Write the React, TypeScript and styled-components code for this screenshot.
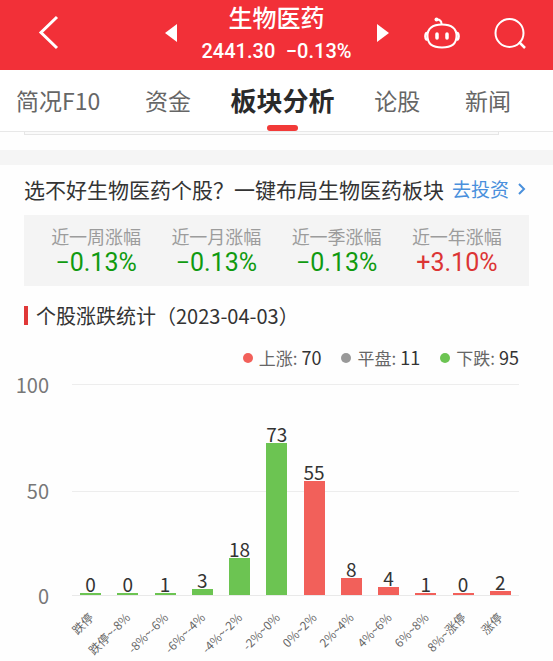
import React from "react";
import styled, { createGlobalStyle } from "styled-components";

const GlobalStyle = createGlobalStyle`
  * { box-sizing: border-box; }
  body {
    margin: 0;
    background: #fefefe;
    color: #333;
    font-family: "Noto Sans CJK SC", sans-serif;
  }
  button { border: 0; padding: 0; background: none; color: inherit; font: inherit; cursor: pointer; }
  a { text-decoration: none; }
  h1, h2, p, dl, dd, ul { margin: 0; padding: 0; font-weight: inherit; }
  svg { display: block; }
`;

const Header = styled.header`
  display: flex;
  align-items: center;
  justify-content: space-between;
  height: 70px;
  padding: 0 27px 4px 38px;
  background: #f23038;
  color: #fff;
`;

const Switcher = styled.div`
  display: flex;
  align-items: center;
  gap: 25px;
  padding-left: 69px;
`;

const Heading = styled.div`
  width: 150px;
  text-align: center;
  white-space: nowrap;
`;

const Name = styled.h1`
  font-size: 24px;
  line-height: 36px;
  font-weight: 500;
`;

const Quote = styled.p`
  display: flex;
  justify-content: space-between;
  font: 500 20px/32px Roboto, sans-serif;
`;

const Actions = styled.div`
  display: flex;
  align-items: center;
  gap: 34px;
`;

const Tabs = styled.nav`
  display: flex;
  justify-content: space-between;
  height: 62px;
  padding: 0 42px 0 16px;
  border-bottom: 1px solid #e8e8e8;
  background: #fff;
`;

const Tab = styled.button<{ $active?: boolean }>`
  display: flex;
  flex-direction: column;
  align-items: center;
  justify-content: space-between;
  height: 61px;
  margin: 0 ${(p) => (p.$active ? -5 : 0)}px;
  font-size: ${(p) => (p.$active ? 26 : 23)}px;
  font-weight: ${(p) => (p.$active ? 700 : 400)};
  line-height: 60px;
  color: ${(p) => (p.$active ? "#2a2a2a" : "#666")};
  white-space: nowrap;

  &::after {
    content: "";
    flex: none;
    width: 31px;
    height: 6px;
    margin-top: -6px;
    border-radius: 3px;
    background: ${(p) => (p.$active ? "#f23a38" : "transparent")};
  }
`;

const PreviousCard = styled.div`
  height: 3px;
  margin: 0 54px 15px 24px;
  border: solid #e6e6e6;
  border-width: 0 1px 1px;
  background: #fafafa;
`;

const Divider = styled.div`
  height: 15px;
  background: #f5f5f5;
`;

const Content = styled.main`
  padding: 0 24px;
`;

const Promo = styled.div`
  display: flex;
  align-items: center;
  justify-content: space-between;
  height: 50px;
  padding-bottom: 3px;
  font-size: 21px;
  white-space: nowrap;
`;

const InvestLink = styled.a`
  display: flex;
  align-items: center;
  gap: 9px;
  padding-right: 3px;
  font-size: 19px;
  color: #4a90dc;
`;

const Stats = styled.dl`
  display: grid;
  grid-template-columns: repeat(4, 1fr);
  height: 71px;
  padding: 8px 12px 0;
  background: #f4f4f4;
  text-align: center;
`;

const StatLabel = styled.dt`
  font-size: 18px;
  line-height: 26px;
  color: #9c9c9c;
  white-space: nowrap;
`;

const StatValue = styled.dd<{ $up?: boolean }>`
  font: 400 25px/28px Roboto, sans-serif;
  color: ${(p) => (p.$up ? "#dc3434" : "#109a10")};
`;

const SectionTitle = styled.h2`
  display: flex;
  align-items: center;
  gap: 8px;
  height: 58px;
  font-size: 20px;
  white-space: nowrap;

  &::before {
    content: "";
    width: 4px;
    height: 19px;
    background: #e03838;
  }
`;

const Legend = styled.ul`
  display: flex;
  justify-content: flex-end;
  gap: 20px;
  height: 40px;
  padding: 0 10px 13px 0;
  list-style: none;
  font-size: 18px;
  line-height: 27px;
  white-space: nowrap;
`;

const LegendItem = styled.li<{ $color: string }>`
  display: flex;
  align-items: center;
  gap: 6px;
  color: #333;

  &::before {
    content: "";
    width: 10px;
    height: 10px;
    border-radius: 50%;
    background: ${(p) => p.$color};
  }
  span { font-size: 17px; color: #666; }
`;

const Chart = styled.div`
  display: grid;
  grid-template-columns: 33px minmax(0, 1fr);
  column-gap: 23px;
  margin: 0 10px 0 -8px;
`;

const Axis = styled.div`
  display: flex;
  flex-direction: column;
  align-items: flex-end;
  justify-content: space-between;
  height: 239px;
  margin: -13px 0 -14px;
  font-size: 20px;
  line-height: 28px;
  color: #777;
`;

const Plot = styled.div`
  display: grid;
  grid-template-columns: repeat(12, minmax(0, 1fr));
  height: 212px;
  border-bottom: 1px solid #e9e9e9;
  background:
    linear-gradient(#ededed, #ededed) 0 0 / 100% 1px no-repeat,
    linear-gradient(#ededed, #ededed) 0 107px / 100% 1px no-repeat;
`;

const Column = styled.div`
  display: flex;
  flex-direction: column;
  align-items: center;
  justify-content: flex-end;
  font-size: 19px;
  line-height: 18px;
`;

const Bar = styled.div<{ $up: boolean }>`
  width: 21px;
  min-height: 2px;
  background: ${(p) => (p.$up ? "#f2605a" : "#6cc452")};
`;

const Ranges = styled.div`
  display: grid;
  grid-template-columns: repeat(12, minmax(0, 1fr));
  grid-column: 2;
  height: 64px;
  padding-top: 10px;
`;

const RangeCell = styled.div`
  display: flex;
  justify-content: flex-end;
  width: 50%;
`;

const Range = styled.span`
  flex: none;
  height: 18px;
  font-size: 12px;
  line-height: 18px;
  color: #666;
  white-space: nowrap;
  transform: rotate(-45deg);
  transform-origin: right center;
`;

const BackIcon = () => (
  <svg width="22" height="36" viewBox="0 0 22 36" fill="none" stroke="#fff" strokeWidth="3">
    <path d="M19 2 3 17.500 19 33" />
  </svg>
);

const Triangle = ({ right }: { right?: boolean }) => (
  <svg width="12" height="18" viewBox="0 0 12 18" fill="#fff">
    <path d={right ? "M0 0 12 9 0 18Z" : "M12 0 0 9 12 18Z"} />
  </svg>
);

const RobotIcon = () => (
  <svg width="36" height="32" viewBox="0 0 36 32" fill="none" stroke="#fff" strokeWidth="2" strokeLinecap="round">
    <path d="M18 7.500C28 7.500 32.500 12 32.500 19S28 30.500 18 30.500 3.500 26 3.500 19 8 7.500 18 7.500Z" />
    <path d="M17.500 7C17.500 4 16 2.500 13 2.500" />
    <circle cx="12.500" cy="2.500" r="2" fill="#fff" stroke="none" />
    <path d="M2.500 16c-1.500 1.500-1.500 5 0 6.500M33.500 16c1.500 1.500 1.500 5 0 6.500" strokeWidth="2.500" />
    <path d="M13 17v4M23 17v4" strokeWidth="3.500" />
  </svg>
);

const SearchIcon = () => (
  <svg width="32" height="32" viewBox="0 0 32 32" fill="none" stroke="#fff" strokeWidth="2">
    <circle cx="15.500" cy="16" r="14" />
    <path d="m25 25 6 6" strokeWidth="2.500" />
  </svg>
);

const ChevronIcon = () => (
  <svg width="8" height="12" viewBox="0 0 8 12" fill="none" stroke="#4a90dc" strokeWidth="2">
    <path d="m1 1 5 5-5 5" />
  </svg>
);

const tabs = ["简况F10", "资金", "板块分析", "论股", "新闻"];

const stats = [
  { label: "近一周涨幅", value: "−0.13%" },
  { label: "近一月涨幅", value: "−0.13%" },
  { label: "近一季涨幅", value: "−0.13%" },
  { label: "近一年涨幅", value: "+3.10%", up: true },
];

const legend = [
  { label: "上涨", count: 70, color: "#f2605a" },
  { label: "平盘", count: 11, color: "#999" },
  { label: "下跌", count: 95, color: "#6cc452" },
];

const PX_PER_STOCK = 2.08;

const distribution = [
  { range: "跌停", count: 0 },
  { range: "跌停~-8%", count: 0 },
  { range: "-8%~-6%", count: 1 },
  { range: "-6%~-4%", count: 3 },
  { range: "-4%~-2%", count: 18 },
  { range: "-2%~0%", count: 73 },
  { range: "0%~2%", count: 55, up: true },
  { range: "2%~4%", count: 8, up: true },
  { range: "4%~6%", count: 4, up: true },
  { range: "6%~8%", count: 1, up: true },
  { range: "8%~涨停", count: 0, up: true },
  { range: "涨停", count: 2, up: true },
];

export default function App() {
  return (
    <>
      <GlobalStyle />
      <Header>
        <button aria-label="返回"><BackIcon /></button>
        <Switcher>
          <button aria-label="上一个"><Triangle /></button>
          <Heading>
            <Name>生物医药</Name>
            <Quote><span>2441.30</span><span>−0.13%</span></Quote>
          </Heading>
          <button aria-label="下一个"><Triangle right /></button>
        </Switcher>
        <Actions>
          <button aria-label="智能助手"><RobotIcon /></button>
          <button aria-label="搜索"><SearchIcon /></button>
        </Actions>
      </Header>
      <Tabs>
        {tabs.map((tab) => (
          <Tab key={tab} $active={tab === "板块分析"}>{tab}</Tab>
        ))}
      </Tabs>
      <PreviousCard />
      <Divider />
      <Content>
        <Promo>
          <p>选不好生物医药个股？一键布局生物医药板块</p>
          <InvestLink href="#invest">去投资<ChevronIcon /></InvestLink>
        </Promo>
        <Stats>
          {stats.map((s) => (
            <div key={s.label}>
              <StatLabel>{s.label}</StatLabel>
              <StatValue $up={s.up}>{s.value}</StatValue>
            </div>
          ))}
        </Stats>
        <SectionTitle>个股涨跌统计（2023-04-03）</SectionTitle>
        <Legend>
          {legend.map((l) => (
            <LegendItem key={l.label} $color={l.color}>
              <p><span>{l.label}:</span> {l.count}</p>
            </LegendItem>
          ))}
        </Legend>
        <Chart>
          <Axis><span>100</span><span>50</span><span>0</span></Axis>
          <Plot>
            {distribution.map((d) => (
              <Column key={d.range}>
                {d.count}
                <Bar $up={!!d.up} style={{ height: d.count * PX_PER_STOCK }} />
              </Column>
            ))}
          </Plot>
          <Ranges>
            {distribution.map((d) => (
              <RangeCell key={d.range}><Range>{d.range}</Range></RangeCell>
            ))}
          </Ranges>
        </Chart>
      </Content>
    </>
  );
}
